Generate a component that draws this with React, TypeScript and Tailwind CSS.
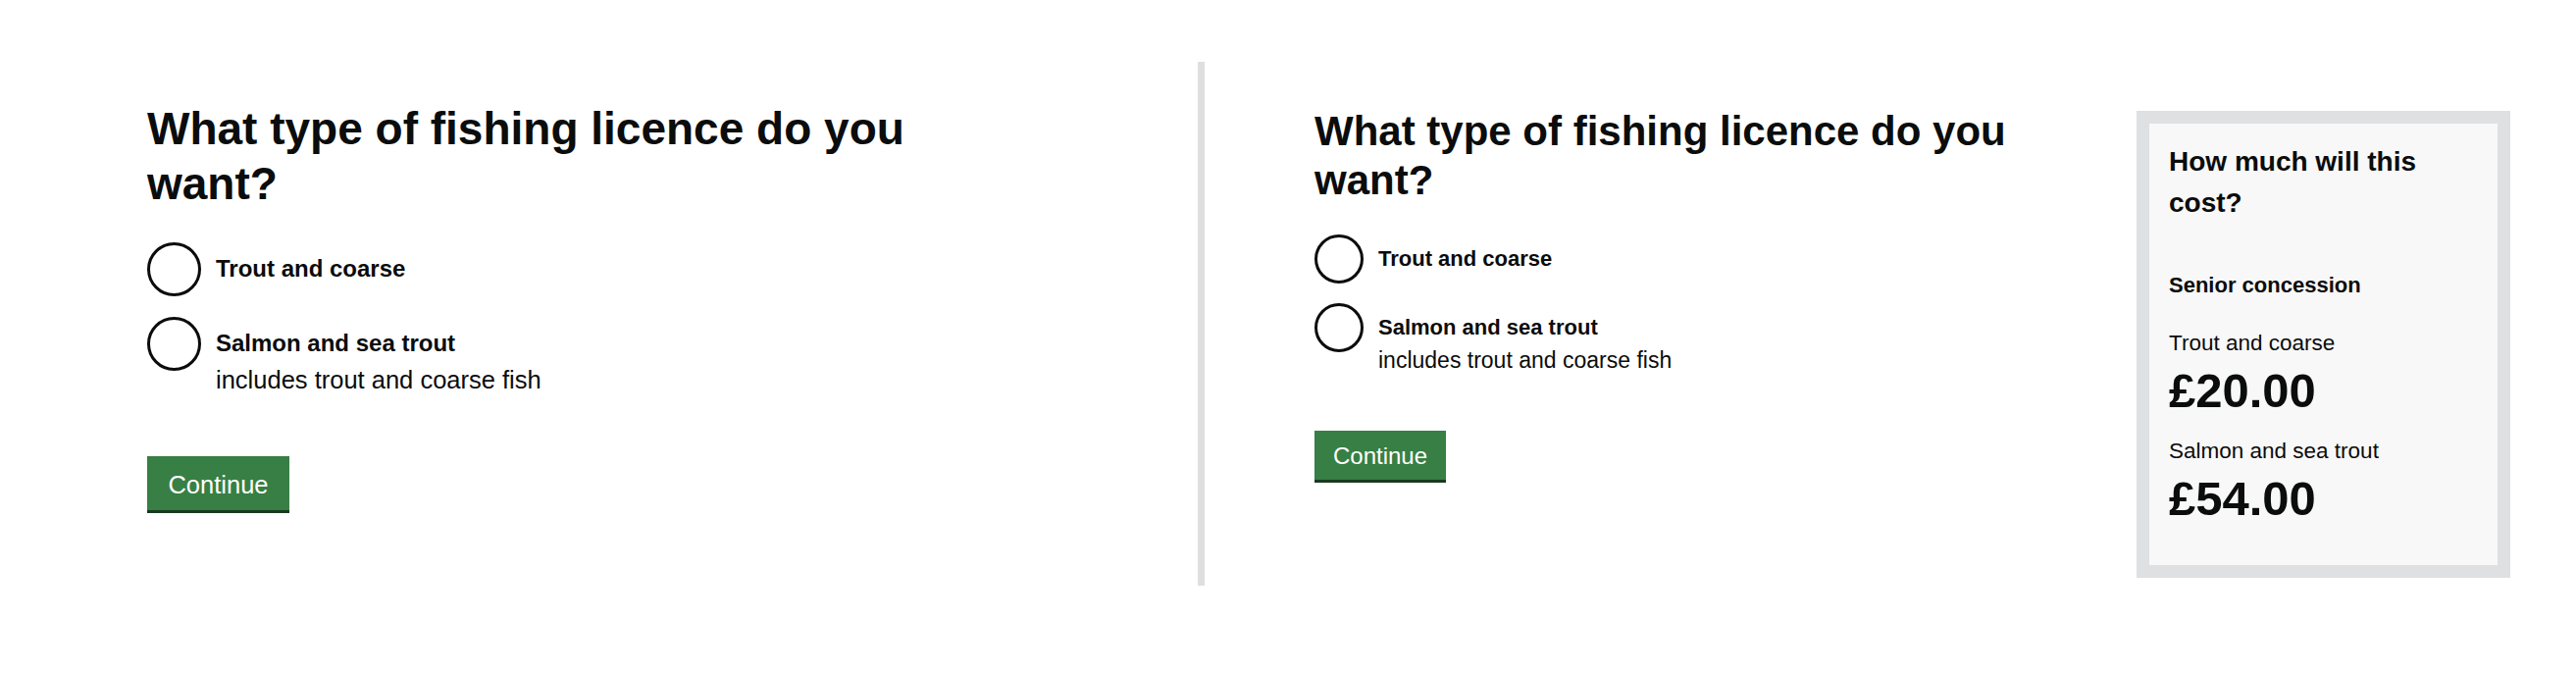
import React from 'react'

interface RadioOption {
  label: string
  hint?: string
}

const options: RadioOption[] = [
  { label: 'Trout and coarse' },
  { label: 'Salmon and sea trout', hint: 'includes trout and coarse fish' },
]

interface QuestionProps {
  large?: boolean
}

function Question({ large }: QuestionProps) {
  // the left copy is rendered slightly bigger than the one beside the panel
  const h1 = large
    ? 'w-[860px] text-[46px] leading-[56px]'
    : 'w-[760px] text-[42px] leading-[50px]'
  const circle = large ? 'w-[55px] h-[55px]' : 'w-[50px] h-[50px]'
  const list = large ? 'mt-[32px] flex flex-col gap-[21px]' : 'mt-[30.5px] flex flex-col gap-[20px]'
  const label = large
    ? 'text-[24px] leading-[30px] pt-[12px]'
    : 'text-[22px] leading-[28px] pt-[11px]'
  const hint = large
    ? 'text-[25.5px] leading-[34px] mt-[5px]'
    : 'text-[23px] leading-[30px] mt-[4px]'
  const button = large
    ? 'mt-[61px] w-[145px] h-[55px] pt-[3px] leading-[52px] text-[25.5px]'
    : 'mt-[57px] w-[134px] h-[50px] pt-[1px] leading-[49px] text-[24px]'

  return (
    <div>
      <h1 className={`font-bold text-[#0b0c0c] ${h1}`}>What type of fishing licence do you want?</h1>
      <div className={list}>
        {options.map((opt) => (
          <div key={opt.label} className="flex items-start gap-[15px]">
            <span className={`shrink-0 rounded-full border-[3px] border-[#0b0c0c] bg-white ${circle}`} />
            <div>
              <p className={`font-bold text-[#0b0c0c] ${label}`}>{opt.label}</p>
              {opt.hint && <p className={`text-[#0b0c0c] ${hint}`}>{opt.hint}</p>}
            </div>
          </div>
        ))}
      </div>
      <button
        type="button"
        className={`block text-center text-white bg-[#377f44] shadow-[0_3px_0_#183a1f] ${button}`}
      >
        Continue
      </button>
    </div>
  )
}

function CostPanel() {
  return (
    <div className="mt-[113px] w-[381px] border-[13px] border-[#dee0e2] bg-[#f8f8f8] px-[20px] pt-[18px] pb-[42px] text-[#0b0c0c]">
      <h2 className="w-[300px] text-[28px] leading-[42px] font-bold">How much will this cost?</h2>
      <p className="mt-[48px] text-[22px] leading-[30px] font-bold">Senior concession</p>
      <p className="mt-[29px] text-[22.5px] leading-[30px]">Trout and coarse</p>
      <p className="mt-[7px] text-[49px] leading-[52px] font-bold">£20.00</p>
      <p className="mt-[21px] text-[22.5px] leading-[30px]">Salmon and sea trout</p>
      <p className="mt-[7px] text-[49px] leading-[52px] font-bold">£54.00</p>
    </div>
  )
}

export default function App() {
  return (
    <div className="flex h-[686px] w-full items-start bg-white font-['Liberation_Sans',Arial,sans-serif]">
      <div className="w-[1221px] shrink-0 pl-[150px] pt-[103px]">
        <Question large />
      </div>
      <div className="mt-[63px] h-[534px] w-[7px] shrink-0 bg-[#dfdfdf]" />
      <div className="flex items-start pl-[112px]">
        <div className="w-[838px] shrink-0 pt-[108.5px]">
          <Question />
        </div>
        <CostPanel />
      </div>
    </div>
  )
}
